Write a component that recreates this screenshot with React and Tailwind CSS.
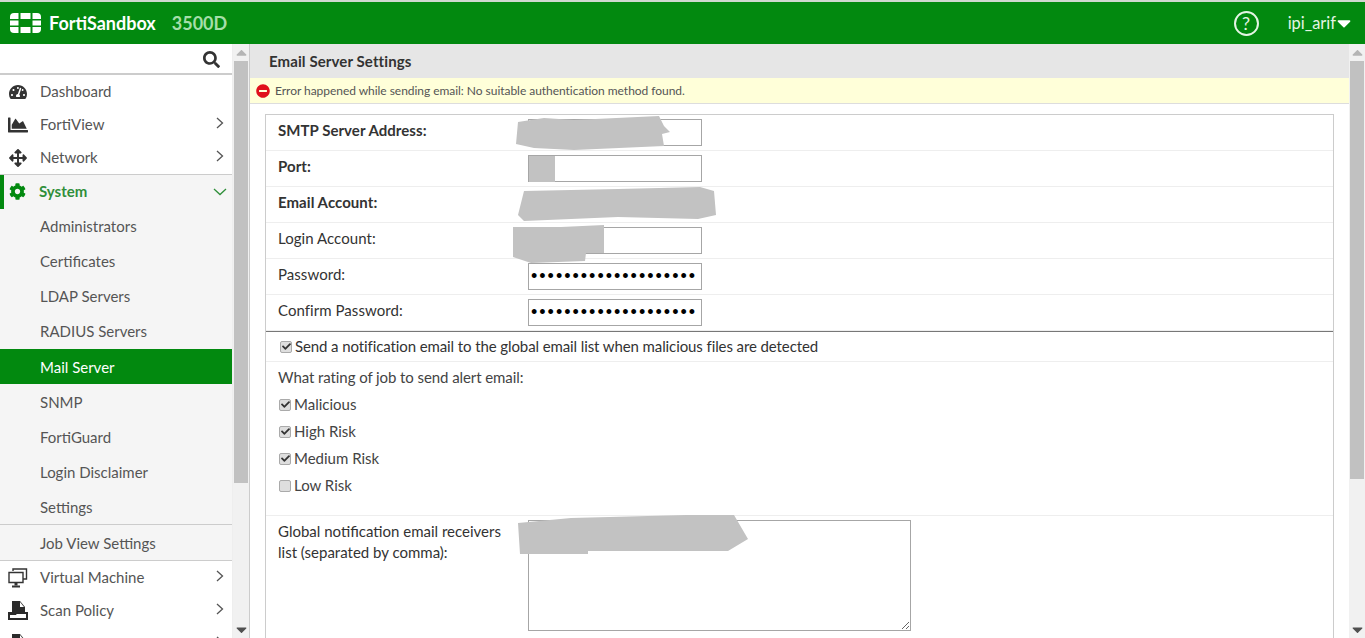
import { FaSearch, FaTachometerAlt, FaChartArea, FaArrowsAlt, FaCog, FaMinusCircle, FaCheck, FaCaretDown, FaCaretUp } from "react-icons/fa";

const subItems = ["Administrators", "Certificates", "LDAP Servers", "RADIUS Servers", "Mail Server", "SNMP", "FortiGuard", "Login Disclaimer", "Settings"];

const ratings = [
  { label: "Malicious", on: true },
  { label: "High Risk", on: true },
  { label: "Medium Risk", on: true },
  { label: "Low Risk", on: false },
];

const Logo = () => (
  <svg width="31" height="22" viewBox="0 0 31 22" fill="#fff">
    <path d="M0 5a4 4 0 0 1 4-4h4.5v6H0z" />
    <path d="M10.5 1h10v6h-10z" />
    <path d="M22.5 1H27a4 4 0 0 1 4 4v2h-8.500z" />
    <path d="M0 8.500h8.500v5H0z" />
    <path d="M22.500 8.500H31v5h-8.500z" />
    <path d="M0 15h8.500v6H4a4 4 0 0 1-4-4z" />
    <path d="M10.500 15h10v6h-10z" />
    <path d="M22.500 15H31v2a4 4 0 0 1-4 4h-4.500z" />
  </svg>
);

const HelpIcon = () => (
  <span className="w-[25px] h-[25px] ml-auto rounded-full border-2 border-[#e4f5e4] flex items-center justify-center text-[18px] text-[#e4f5e4] leading-none">?</span>
);

const Chevron = () => (
  <svg width="8" height="12" viewBox="0 0 8 12" className="ml-auto mr-[8px] -translate-y-[2px] shrink-0" fill="none" stroke="#555" strokeWidth="1.3">
    <path d="M1 1l5.500 5L1 11" />
  </svg>
);

const ChevronDown = () => (
  <svg width="14" height="8" viewBox="0 0 14 8" className="ml-auto mr-[5px] shrink-0" fill="none" stroke="#2f8f3a" strokeWidth="1.3">
    <path d="M1 1l6 5.500L13 1" />
  </svg>
);

const MonitorIcon = () => (
  <svg width="20" height="20" viewBox="0 0 20 20" fill="none" stroke="#333" strokeWidth="1.4">
    <path d="M5 3V1h13.500v10H15" />
    <path d="M1 4.500h14v10H1z" fill="#fff" />
    <path d="M4 18.500h8" strokeWidth="2" />
    <path d="M8 14.500v3" strokeWidth="3" />
  </svg>
);

const PolicyIcon = () => (
  <svg width="20" height="20" viewBox="0 0 20 20">
    <path d="M4 0h8l5 6v6H4z" fill="#2b2b2b" />
    <path d="M12 1l4 5h-4z" fill="#fff" />
    <path d="M1 12h18v6H1z" fill="#fff" stroke="#2b2b2b" strokeWidth="2" />
    <path d="M1 11h9l-2 3H1z" fill="#2b2b2b" />
  </svg>
);

const NavItem = ({ icon, label, arrow = true }) => (
  <div className="flex items-center pl-[8px] h-[33px] shrink-0">
    <span className="w-[20px] flex justify-center text-[#333] text-[18px]">{icon}</span>
    <span className="ml-3 text-[15px] text-[#555]">{label}</span>
    {arrow && <Chevron />}
  </div>
);

const Scrollbar = ({ thumbHeight }) => (
  <div className="w-[16px] h-full bg-[#f1f1f1] flex flex-col items-center shrink-0">
    <FaCaretUp className="text-[#b5b5b5] text-[11px] h-[17px] shrink-0" />
    <div className="w-[14px] bg-[#c1c1c1]" style={{ height: thumbHeight }} />
    <FaCaretDown className="text-[#505050] text-[11px] h-[17px] mt-auto shrink-0" />
  </div>
);

const Check = ({ on }) => (
  <span className="w-[12px] h-[12px] rounded-[2px] border border-[#aaa] bg-[#dedede] flex items-center justify-center shrink-0">
    {on && <FaCheck className="text-[9px] text-[#333]" />}
  </span>
);

const Smudge = ({ className, d, w, h }) => (
  <svg className={`absolute blur-[0.6px] ${className}`} width={w} height={h} viewBox={`0 0 ${w} ${h}`}>
    <path d={d} fill="#c2c2c2" />
  </svg>
);

const Row = ({ label, bold, password }) => (
  <div className="h-[36px] flex border-b border-[#eee] shrink-0 pl-[12px]">
    <span className={`w-[250px] mt-[5px] text-[15px] leading-5 text-[#333] tracking-[0.05px] ${bold ? "font-bold" : ""}`}>{label}</span>
    {password ? (
      <input
        readOnly
        type="password"
        value="aaaaaaaaaaaaaaaaaaaa"
        className="w-[174px] h-[27px] mt-[4px] border border-[#a6a6a6] px-[2px] text-black text-[18px] tracking-[2px] outline-none font-['Liberation_Sans',sans-serif]"
      />
    ) : (
      <span className="w-[174px] h-[27px] mt-[4px] border border-[#a6a6a6] bg-white" />
    )}
  </div>
);

export default function App() {
  return (
    <div className="w-[1365px] h-[638px] overflow-hidden flex flex-col bg-white font-['Lato','Open_Sans',sans-serif]">
      {/* top bar */}
      <header className="h-[44px] shrink-0 bg-[#02890f] border-t-2 border-[#cfd8cf] flex items-center pl-[10px] text-white">
        <Logo />
        <span className="ml-[8px] text-[18px] font-bold">FortiSandbox</span>
        <span className="ml-[16px] text-[18px] font-bold text-[#a5dea9]">3500D</span>
        <HelpIcon />
        <span className="ml-[29px] text-[16.4px] text-[#e4f5e4]">ipi_arif</span>
        <FaCaretDown className="text-[22px] mr-[10px] ml-[-3px]" />
      </header>

      <div className="flex flex-1 min-h-0">
        {/* sidebar */}
        <aside className="w-[233px] shrink-0 flex flex-col overflow-hidden border-r border-[#eee]">
          <div className="h-[31px] shrink-0 border-b-2 border-[#ccc] flex items-center justify-end pr-[12px] pt-[1px]">
            <FaSearch className="text-[17px] text-[#333]" />
          </div>
          <NavItem icon={<FaTachometerAlt />} label="Dashboard" arrow={false} />
          <NavItem icon={<FaChartArea className="text-[20px]" />} label="FortiView" />
          <NavItem icon={<FaArrowsAlt />} label="Network" />
          <div className="shrink-0 bg-[#f5f5f5] border-t border-[#ccc]">
            <div className="h-[34px] flex items-center border-l-[4px] border-[#02890f] pl-[3px] pb-px">
              <span className="w-[20px] flex justify-center text-[#02890f] text-[17px]"><FaCog /></span>
              <span className="ml-[12px] text-[15px] font-bold text-[#2f8f3a]">System</span>
              <ChevronDown />
            </div>
            {subItems.map((item, i) => (
              <div
                key={item}
                className={`h-[35px] flex items-center pl-[40px] text-[15px] ${i >= 4 ? "pt-px" : ""} ${item === "Mail Server" ? "bg-[#02890f] text-white" : "text-[#555]"}`}
              >
                {item}
              </div>
            ))}
            <div className="h-[37px] flex items-center pl-[40px] pt-px text-[15px] text-[#555] border-y border-[#ccc]">Job View Settings</div>
          </div>
          <NavItem icon={<MonitorIcon />} label="Virtual Machine" />
          <NavItem icon={<PolicyIcon />} label="Scan Policy" />
          <NavItem icon={<PolicyIcon />} label="" />
        </aside>

        <Scrollbar thumbHeight={422} />

        {/* content */}
        <main className="flex-1 min-w-0 flex flex-col overflow-hidden border-l border-[#ccc]">
          <h1 className="h-[34px] shrink-0 bg-[#e6e6e6] flex items-center pl-[19px] text-[15px] font-bold tracking-[0.1px] text-[#333]">Email Server Settings</h1>
          <div className="h-[26px] shrink-0 bg-[#ffffd9] border-b border-[#ddd] flex items-center pl-[6px] text-[12px] tracking-[-0.04px] text-[#555]">
            <FaMinusCircle className="text-[#e0101c] text-[14px]" />
            <span className="ml-[5px]">Error happened while sending email: No suitable authentication method found.</span>
          </div>

          <section className="mt-[10px] ml-[15px] mr-[15px] flex-1 border border-b-0 border-[#ccc] flex flex-col relative">
            <Row label="SMTP Server Address:" bold />
            <Row label="Port:" bold />
            <div className="h-[36px] flex border-b border-[#eee] shrink-0 pl-[12px]">
              <span className="mt-[5px] text-[15px] leading-5 font-bold tracking-[0.05px] text-[#333]">Email Account:</span>
            </div>
            <Row label="Login Account:" />
            <Row label="Password:" password />
            <div className="border-b border-[#777] shrink-0">
              <Row label="Confirm Password:" password />
            </div>

            <div className="h-[30px] shrink-0 flex items-center pl-[14px] gap-[3px] border-b border-[#eee] text-[15px] tracking-[-0.1px] text-[#333]">
              <Check on />
              <span>Send a notification email to the global email list when malicious files are detected</span>
            </div>

            <div className="shrink-0 pl-[12px] pt-[5px] h-[154px] border-b border-[#eee] text-[15px] text-[#444]">
              <p className="leading-5 mb-[4px] tracking-[-0.08px]">What rating of job to send alert email:</p>
              {ratings.map((r) => (
                <div key={r.label} className="h-[27px] flex items-center gap-[3px] pl-[1px]">
                  <Check on={r.on} />
                  <span>{r.label}</span>
                </div>
              ))}
            </div>

            <div className="flex pl-[12px] pt-[4px]">
              <p className="w-[250px] text-[15px] leading-[21px] text-[#333] mt-px">
                Global notification email receivers<br />list (separated by comma):
              </p>
              <textarea readOnly className="w-[383px] h-[111px] border border-[#a6a6a6] resize-y outline-none" />
            </div>

            {/* redaction smudges in the source picture */}
            <Smudge className="left-[248px] -top-px" w={156} h={36} d="M4 8 L30 4 L60 6 L145 2 L150 12 L156 18 L148 20 L150 32 L60 36 L20 34 L2 30 Z" />
            <Smudge className="left-[262px] top-[40px]" w={28} h={27} d="M1 1H27V27H1Z" />
            <Smudge className="left-[252px] top-[72px]" w={198} h={34} d="M6 4 L100 2 L182 0 L196 4 L198 28 L180 32 L100 30 L6 34 L0 28 Z" />
            <Smudge className="left-[245px] top-[110px]" w={95} h={38} d="M2 2 L50 2 L93 0 L93 28 L75 28 L74 36 L20 38 L2 32 Z" />
            <Smudge className="left-[250px] top-[400px]" w={232} h={39} d="M2 8 L55 3 L170 0 L218 0 L232 24 L212 36 L72 36 L72 39 L4 39 Z" />
          </section>
        </main>

        <Scrollbar thumbHeight={418} />
      </div>
    </div>
  );
}
